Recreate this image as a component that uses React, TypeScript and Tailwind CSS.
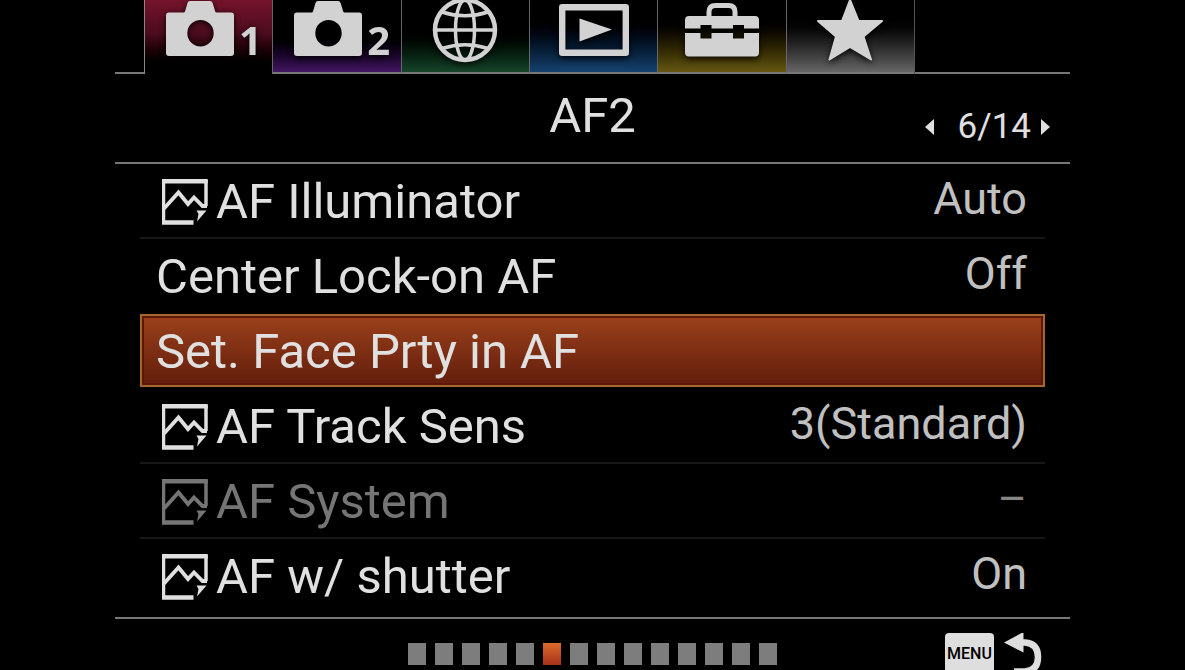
import React, { useState } from 'react';
import clsx from 'clsx';

interface MenuItem {
  label: string;
  value?: string;
  still?: boolean;
  disabled?: boolean;
}

const ITEMS: MenuItem[] = [
  { label: 'AF Illuminator', value: 'Auto', still: true },
  { label: 'Center Lock-on AF', value: 'Off' },
  { label: 'Set. Face Prty in AF' },
  { label: 'AF Track Sens', value: '3(Standard)', still: true },
  { label: 'AF System', value: '–', still: true, disabled: true },
  { label: 'AF w/ shutter', value: 'On', still: true },
];

const PAGE_COUNT = 14;

const CameraIcon = () => (
  <svg viewBox="0 0 68 57" className="w-[68px] h-[57px]" fill="currentColor" aria-hidden="true">
    <path
      fillRule="evenodd"
      d="M24 1h20q2 0 2.600 2l2.600 8.500q.4 1 1.500 1H65q3 0 3 3V53q0 3-3 3H3q-3 0-3-3V15.500q0-3 3-3h14.500q1.100 0 1.500-1L21.500 3Q22 1 24 1ZM34.500 20a13.200 13.200 0 1 0 0 26.400a13.200 13.200 0 1 0 0-26.400Z"
    />
  </svg>
);

const GlobeIcon = () => (
  <svg viewBox="0 0 66 66" className="w-[66px] h-[66px]" fill="none" stroke="currentColor" strokeWidth="3.500" aria-hidden="true">
    <circle cx="33" cy="33" r="30" strokeWidth="4.500" />
    <ellipse cx="33" cy="33" rx="9.500" ry="30" />
    <path d="M3 33h60M10 15q23 7.500 46 0M10 51.500q23-7.500 46 0" />
  </svg>
);

const PlaybackIcon = () => (
  <svg viewBox="0 0 70 52" className="w-[70px] h-[52px]" aria-hidden="true">
    <rect x="3.200" y="3.200" width="63.600" height="45.600" fill="none" stroke="currentColor" strokeWidth="6.400" strokeLinejoin="round" />
    <path d="M20.500 14.500 53 25.500 20.500 37.500Z" fill="currentColor" />
  </svg>
);

const ToolboxIcon = () => (
  <svg viewBox="0 0 74 54" className="w-[74px] h-[54px]" fill="currentColor" aria-hidden="true">
    <path d="M24 14V9q0-6.500 6.500-6.500h13Q50 2.500 50 9v5" fill="none" stroke="currentColor" strokeWidth="5" />
    <path d="M4 13h66q4 0 4 4v8.500H59V22H48v3.500H26.500V22h-11v3.500H0V17q0-4 4-4Z" />
    <path d="M0 30h15.500v5.500h11V30H48v5.500h11V30h15v19.500q0 4-4 4H4q-4 0-4-4Z" />
  </svg>
);

const StarIcon = () => (
  <svg viewBox="0 0 66 62" className="w-[66px] h-[62px]" fill="currentColor" stroke="currentColor" strokeWidth="2" strokeLinejoin="round" aria-hidden="true">
    <path d="M33 1 41.500 22H65L46.500 37.500 54 60.500 33 48 12.500 60.500 19 37.500 1 22H25Z" />
  </svg>
);

// still-image mark in front of an item: framed mountains with a folded corner
const StillIcon = () => (
  <svg viewBox="0 0 46 46" className="ml-[6px] mr-2 w-[46px] h-[46px] shrink-0" aria-hidden="true">
    <g fill="none" stroke="currentColor">
      <path d="M1.500 45V1M44 1V27" strokeWidth="3.500" />
      <path d="M0 2.200H45.700M0 43.500H31.500" strokeWidth="4.400" />
      <path d="M2 29.500 16.500 13.500 26 25 32 18.500 40.500 27H45" strokeWidth="3.800" />
    </g>
    <path d="M34.500 31.500H44.500L35 42.500 36.500 35Z" fill="currentColor" />
  </svg>
);

const TABS = [
  { name: 'Camera 1', icon: <CameraIcon />, digit: '1', bg: 'bg-linear-to-b from-[#75132c] via-[#4c0c1e] via-45% to-black to-95%' },
  { name: 'Camera 2', icon: <CameraIcon />, digit: '2', bg: 'bg-linear-to-b from-black from-45% to-[#421762]' },
  { name: 'Network', icon: <GlobeIcon />, bg: 'bg-linear-to-b from-black from-35% to-[#16452a]' },
  { name: 'Playback', icon: <PlaybackIcon />, bg: 'bg-linear-to-b from-black from-20% to-[#16426f]' },
  { name: 'Setup', icon: <ToolboxIcon />, bg: 'bg-linear-to-b from-black from-20% to-[#655711]' },
  { name: 'My Menu', icon: <StarIcon />, bg: 'bg-linear-to-b from-black from-20% to-[#666]' },
];

export default function App() {
  const [tab, setTab] = useState(0);
  const [page, setPage] = useState(6);
  const [selected, setSelected] = useState(2);

  const turnPage = (step: number) => {
    setPage(p => ((p - 1 + step + PAGE_COUNT) % PAGE_COUNT) + 1);
  };

  return (
    <div className="h-screen overflow-hidden bg-black px-[115px] text-[#e0e0e0] font-[Roboto,'Liberation_Sans',sans-serif]">
      {/* Tabs */}
      <nav className="flex h-[74px]">
        <div className="w-[29px] border-b-2 border-[#777]" />
        <div className="grid flex-1 grid-cols-6 border-r border-[#555]">
          {TABS.map((item, i) => (
            <button
              key={item.name}
              aria-label={item.name}
              onClick={() => setTab(i)}
              className={clsx(
                'flex overflow-hidden border-l text-[#d2d2d2]',
                item.bg,
                i === tab ? 'border-[#888]' : 'border-b-2 border-l-[#666] border-b-[#777]',
                item.digit ? 'items-start pl-[21px]' : 'items-center justify-center pb-3',
              )}
            >
              <span className="drop-shadow-[0_2px_3px_rgba(0,0,0,0.9)]">{item.icon}</span>
              {item.digit && (
                <span className="ml-[5px] pt-3 font-['Open_Sans',sans-serif] text-[40px] leading-[56px] font-bold drop-shadow-[0_2px_3px_rgba(0,0,0,0.9)]">
                  {item.digit}
                </span>
              )}
            </button>
          ))}
        </div>
        <div className="w-[155px] border-b-2 border-[#777]" />
      </nav>

      {/* Title and page number */}
      <header className="grid h-[90px] grid-cols-[1fr_auto_1fr] border-b-2 border-[#777]">
        <h1 className="col-start-2 text-[49px] leading-[83px]">AF2</h1>
        <div className="flex items-center justify-end pt-[18px] pr-5">
          <button aria-label="Previous page" onClick={() => turnPage(-1)}>
            <svg viewBox="0 0 9 16" className="w-[9px] h-4" fill="currentColor"><path d="M9 0v16L0 8Z" /></svg>
          </button>
          <span className="mr-[10px] ml-6 text-[35px] leading-[60px]">{page}/{PAGE_COUNT}</span>
          <button aria-label="Next page" onClick={() => turnPage(1)}>
            <svg viewBox="0 0 9 16" className="w-[9px] h-4" fill="currentColor"><path d="M0 0v16l9-8Z" /></svg>
          </button>
        </div>
      </header>

      {/* Items */}
      <ul className="border-b-2 border-[#777] px-[25px] pb-[3px]">
        {ITEMS.map((item, i) => {
          const active = i === selected;
          const line = !active && i + 1 !== selected && i + 1 < ITEMS.length;
          return (
            <li key={item.label} className={clsx('h-[75px]', line && 'border-b-2 border-[#181818]')}>
              <button
                disabled={item.disabled}
                onClick={() => setSelected(i)}
                className={clsx(
                  'flex w-full items-start justify-between border-2 pr-4 pl-[14px] text-left whitespace-nowrap',
                  active
                    ? 'h-[73px] border-[#a5652f] bg-linear-to-b from-[#9b411b] to-[#621d0c] shadow-[inset_0_0_0_2px_#5c1709]'
                    : 'h-full border-transparent',
                  item.disabled && 'text-[#757575]',
                )}
              >
                <span className="flex items-center text-[49px] leading-[71px]">
                  {item.still && <StillIcon />}
                  {item.label}
                </span>
                <span className={clsx('text-[45px] leading-[65px]', item.disabled ? 'text-[#858585]' : 'text-[#c0c0c0]')}>
                  {item.value}
                </span>
              </button>
            </li>
          );
        })}
      </ul>

      {/* Page dots and key guide */}
      <footer className="grid grid-cols-[1fr_auto_1fr] pt-[14px]">
        <div className="col-start-2 flex gap-[9px] pt-[10px]">
          {Array.from({ length: PAGE_COUNT }, (_, i) => (
            <button
              key={i}
              aria-label={`Page ${i + 1}`}
              onClick={() => setPage(i + 1)}
              className={clsx(
                'h-[22px] w-[18px]',
                i + 1 === page ? 'bg-linear-to-b from-[#de6a2d] to-[#a5301b]' : 'bg-[#7d7d7d]',
              )}
            />
          ))}
        </div>
        <button className="flex items-start justify-end pr-7">
          <span className="h-[50px] w-[49px] rounded-[4px] bg-[#dedede] text-center text-[16px] leading-[42px] font-medium text-black">MENU</span>
          <svg viewBox="0 0 38 50" className="ml-[10px] w-[38px] h-[50px]" aria-hidden="true">
            <path d="M16 9.500h5q13 1 13 14.500T21 38.500H10" fill="none" stroke="#dedede" strokeWidth="6.500" />
            <path d="M0 9.500 19.500-1v20.500Z" fill="#dedede" />
          </svg>
        </button>
      </footer>
    </div>
  );
}
